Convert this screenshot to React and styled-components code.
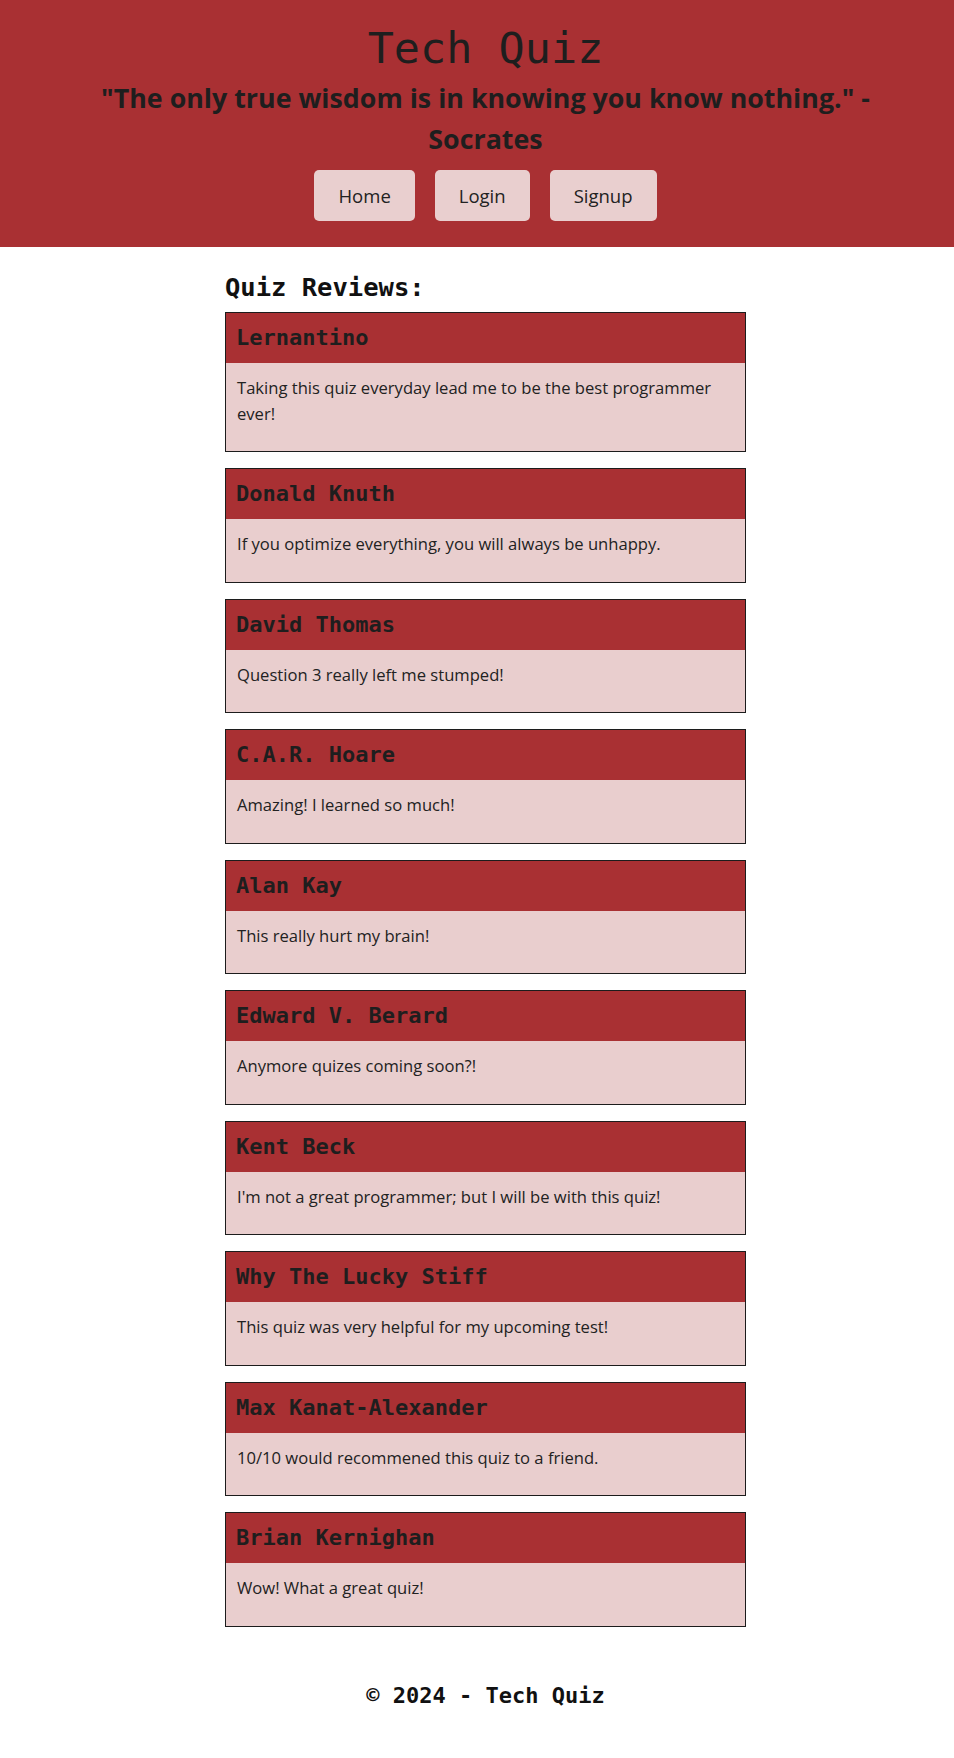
import React from "react";
import styled, { createGlobalStyle } from "styled-components";

const reviews = [
  { name: "Lernantino", text: "Taking this quiz everyday lead me to be the best programmer ever!" },
  { name: "Donald Knuth", text: "If you optimize everything, you will always be unhappy." },
  { name: "David Thomas", text: "Question 3 really left me stumped!" },
  { name: "C.A.R. Hoare", text: "Amazing! I learned so much!" },
  { name: "Alan Kay", text: "This really hurt my brain!" },
  { name: "Edward V. Berard", text: "Anymore quizes coming soon?!" },
  { name: "Kent Beck", text: "I'm not a great programmer; but I will be with this quiz!" },
  { name: "Why The Lucky Stiff", text: "This quiz was very helpful for my upcoming test!" },
  { name: "Max Kanat-Alexander", text: "10/10 would recommened this quiz to a friend." },
  { name: "Brian Kernighan", text: "Wow! What a great quiz!" },
];

export default function App() {
  return (
    <>
      <GlobalStyle />
      <Header>
        <Title>Tech Quiz</Title>
        <Quote>"The only true wisdom is in knowing you know nothing." - Socrates</Quote>
        <Nav>
          <NavButton>Home</NavButton>
          <NavButton>Login</NavButton>
          <NavButton>Signup</NavButton>
        </Nav>
      </Header>
      <Main>
        <Section>
          <SectionTitle>Quiz Reviews:</SectionTitle>
          {reviews.map((r) => (
            <Card key={r.name}>
              <CardHeader>{r.name}</CardHeader>
              <CardBody>
                <CardText>{r.text}</CardText>
              </CardBody>
            </Card>
          ))}
        </Section>
      </Main>
      <Footer>© 2024 - Tech Quiz</Footer>
    </>
  );
}

const GlobalStyle = createGlobalStyle`
  body {
    margin: 0;
    background: #fff;
    color: #212121;
    font-family: "Open Sans", "Noto Sans", sans-serif;
  }
  * { box-sizing: border-box; }
`;

const Header = styled.header`
  background: #a93033;
  padding: 20px 0 26px 17px;
  display: flex;
  flex-direction: column;
  align-items: center;
`;

const Title = styled.h1`
  margin: 0;
  font-family: "DejaVu Sans Mono", monospace;
  font-weight: 400;
  font-size: 43.5px;
  line-height: 56px;
  color: #1e1e1e;
`;

const Quote = styled.h2`
  margin: 1px 0 0;
  max-width: 840px;
  text-align: center;
  font-family: "Open Sans", sans-serif;
  font-weight: 700;
  font-size: 26.8px;
  line-height: 41px;
  color: #1e1e1e;
`;

const Nav = styled.nav`
  display: flex;
  gap: 20px;
  margin-top: 11px;
`;

const NavButton = styled.button`
  height: 51px;
  padding: 0 24px;
  border: none;
  border-radius: 5px;
  background: #e9cfcf;
  color: #222;
  font-family: "Open Sans", sans-serif;
  font-size: 18.5px;
`;

const Main = styled.main`
  display: flex;
  justify-content: center;
  padding: 25px 0 0 17px;
`;

const Section = styled.section`
  width: 521px;
`;

const SectionTitle = styled.h3`
  margin: 0 0 10px;
  font-family: "DejaVu Sans Mono", monospace;
  font-weight: 700;
  font-size: 25.5px;
  line-height: 30px;
  color: #111;
`;

const Card = styled.article`
  border: 1px solid #1c1c1c;
  margin-bottom: 16px;
`;

const CardHeader = styled.h4`
  margin: 0;
  padding: 10px;
  background: #a93033;
  font-family: "DejaVu Sans Mono", monospace;
  font-weight: 700;
  font-size: 22px;
  line-height: 30px;
  color: #1e1e1e;
`;

const CardBody = styled.div`
  background: #e9cece;
  padding: 12px 10px 12px 11px;
`;

const CardText = styled.p`
  margin: 0 0 13px;
  font-size: 16.6px;
  line-height: 25.5px;
  color: #222;
`;

const Footer = styled.footer`
  padding: 38px 0 47px 17px;
  text-align: center;
  font-family: "DejaVu Sans Mono", monospace;
  font-weight: 700;
  font-size: 22px;
  line-height: 30px;
  color: #111;
`;
